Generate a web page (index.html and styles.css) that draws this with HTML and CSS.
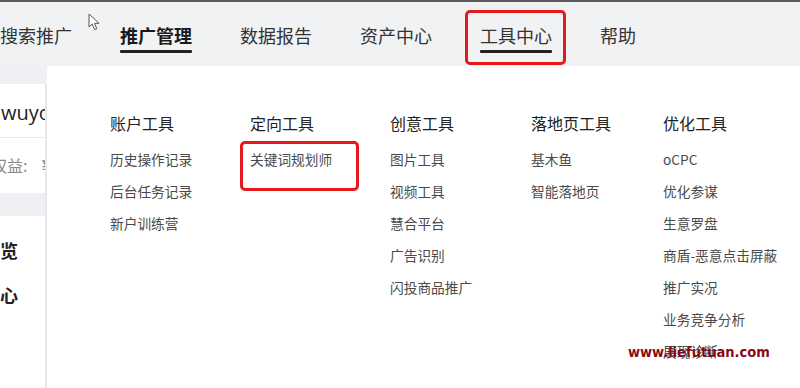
FILE: index.html
```html
<!DOCTYPE html>
<html lang="zh-CN">
<head>
<meta charset="utf-8">
<link rel="stylesheet" href="styles.css">
</head>
<body>
<div class="page">
  <header class="topbar">
    <nav class="nav">
      <span class="nav-item">搜索推广</span>
      <span class="nav-item active">推广管理</span>
      <span class="nav-item">数据报告</span>
      <span class="nav-item">资产中心</span>
      <span class="nav-item current">工具中心</span>
      <span class="nav-item">帮助</span>
    </nav>
  </header>
  <div class="body">
    <aside class="sidebar">
      <div class="card">
        <div class="account">wuyou</div>
        <div class="rights"><span class="rights-text">权益:</span><span class="rights-icon">¥</span></div>
      </div>
      <div class="menu">
        <div class="menu-item">概览</div>
        <div class="menu-item">中心</div>
      </div>
    </aside>
  </div>

  <div class="dropdown">
    <div class="col c1">
      <div class="col-title">账户工具</div>
      <div class="link">历史操作记录</div>
      <div class="link">后台任务记录</div>
      <div class="link">新户训练营</div>
    </div>
    <div class="col c2">
      <div class="col-title">定向工具</div>
      <div class="link">关键词规划师</div>
    </div>
    <div class="col c3">
      <div class="col-title">创意工具</div>
      <div class="link">图片工具</div>
      <div class="link">视频工具</div>
      <div class="link">慧合平台</div>
      <div class="link">广告识别</div>
      <div class="link">闪投商品推广</div>
    </div>
    <div class="col c4">
      <div class="col-title">落地页工具</div>
      <div class="link">基木鱼</div>
      <div class="link">智能落地页</div>
    </div>
    <div class="col c5">
      <div class="col-title">优化工具</div>
      <div class="link">oCPC</div>
      <div class="link">优化参谋</div>
      <div class="link">生意罗盘</div>
      <div class="link">商盾-恶意点击屏蔽</div>
      <div class="link">推广实况</div>
      <div class="link">业务竞争分析</div>
      <div class="link">展现诊断</div>
    </div>
  </div>

  <div class="mark mark-nav"></div>
  <div class="mark mark-kw"></div>
  <div class="watermark">www.liefutuan.com</div>
  <svg class="cursor" width="14" height="18" viewBox="0 0 14 18">
    <path d="M1 1 L1 14 L4.2 11 L6.6 16.5 L8.8 15.6 L6.5 10.3 L11 10.3 Z" fill="#fff" stroke="#555" stroke-width="1" stroke-linejoin="round"/>
  </svg>
</div>
</body>
</html>
```

FILE: styles.css
```css
* { box-sizing: border-box; }
html, body { margin: 0; padding: 0; }
body {
  width: 800px;
  height: 388px;
  overflow: hidden;
  background: #eef0f3;
  font-family: "Noto Sans CJK SC", "Noto Sans", sans-serif;
}
.page {
  position: relative;
  width: 800px;
  height: 388px;
  overflow: hidden;
}
.topbar {
  height: 66px;
  border-top: 2px solid #5a5a5a;
  background: #f1f2f4;
}
.nav {
  display: flex;
  gap: 48px;
  padding-top: 20px;
}
.nav-item {
  position: relative;
  width: 72px;
  font-size: 18px;
  line-height: 26px;
  color: #333;
  white-space: nowrap;
}
.nav-item.active {
  font-weight: 700;
  color: #1a1a1a;
}
.nav-item.active::after,
.nav-item.current::after {
  content: "";
  position: absolute;
  left: 0;
  right: 0;
  top: 28px;
  height: 3px;
  background: #222;
  border-radius: 1px;
}
.body {
  padding-top: 18px;
}
.sidebar {
  width: 47px;
  height: 310px;
  border-right: 2px solid #e6e7ea;
  overflow: hidden;
}
.card {
  background: #fff;
  height: 109px;
}
.account {
  height: 54px;
  border-bottom: 1px solid #e8e8e8;
  font-size: 20px;
  line-height: 54px;
  color: #222;
  font-family: "Open Sans", "Noto Sans", sans-serif;
  padding-left: 1px;
  padding-top: 2px;
  white-space: nowrap;
}
.rights {
  display: flex;
  align-items: center;
  height: 54px;
  margin-left: -9px;
  white-space: nowrap;
}
.rights-text {
  font-size: 16px;
  color: #888;
}
.rights-icon {
  margin-left: 14px;
  font-size: 18px;
  font-weight: 700;
  color: #999;
}
.menu {
  margin-top: 23px;
  background: #fff;
  height: 200px;
  padding-top: 21px;
}
.menu-item {
  font-size: 18px;
  font-weight: 700;
  line-height: 26px;
  margin-bottom: 19px;
  margin-left: -18px;
  color: #222;
  white-space: nowrap;
}
.dropdown {
  position: absolute;
  left: 47px;
  top: 66px;
  right: 0;
  bottom: 0;
  background: #fff;
  display: grid;
  grid-template-columns: 140px 140px 141px 132px 1fr;
  padding: 45px 0 0 63px;
  align-items: start;
}
.col-title {
  font-size: 16px;
  line-height: 24px;
  color: #222;
  margin-bottom: 8px;
  white-space: nowrap;
}
.link {
  font-size: 13.7px;
  line-height: 32px;
  color: #4a4a4a;
  white-space: nowrap;
}
.mark {
  position: absolute;
  border: 3px solid #e3191c;
  border-radius: 5px;
}
.mark-nav {
  left: 465px;
  top: 10px;
  width: 101px;
  height: 55px;
}
.mark-kw {
  left: 240px;
  top: 141px;
  width: 119px;
  height: 50px;
}
.watermark {
  position: absolute;
  left: 628px;
  top: 341px;
  font-family: "DejaVu Sans Condensed", "DejaVu Sans", sans-serif;
  font-weight: 700;
  font-size: 14.5px;
  line-height: 22px;
  color: #8a0a12;
}
.cursor {
  position: absolute;
  left: 88px;
  top: 13px;
}
```
